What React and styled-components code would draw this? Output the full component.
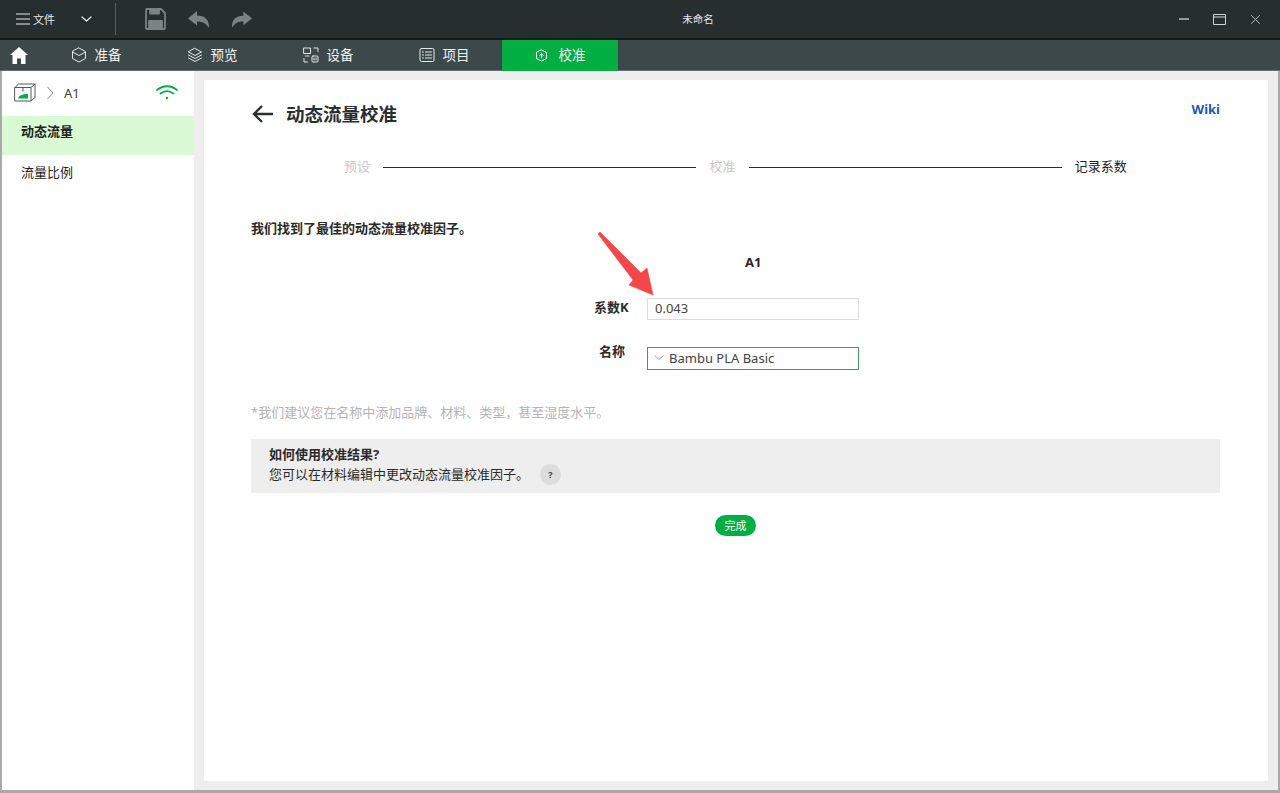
import styled, {createGlobalStyle} from 'styled-components'

const green = '#00ae42'
const toolGrey = '#7a8282'
const cjk = '"Noto Sans", "Noto Sans CJK SC", sans-serif'

const Global = createGlobalStyle`
    html, body {margin: 0; padding: 0; height: 100%; background: #fff;}
    body {font-family: ${cjk}; overflow: hidden;}
    * {box-sizing: border-box;}
`

const Page = styled.div`
    width: 1280px;
    height: 793px;
    display: flex;
    flex-direction: column;
    border-left: 2px solid #a9a9a9;
    border-right: 2px solid #a9a9a9;
    border-bottom: 3px solid #a9a9a9;
`
const TitleBar = styled.div`
    height: 40px;
    margin-left: -2px;
    margin-right: -2px;
    flex: none;
    display: flex;
    align-items: center;
    background: #262e30;
    border-bottom: 2px solid #15191a;
    color: #e6e8e8;
`
const TitleLeft = styled.div`
    width: 260px;
    display: flex;
    align-items: center;
    padding-left: 16px;
`
const FileLabel = styled.span`
    font-size: 11px;
    margin-left: 3px;
    width: 26px;
`
const Chevron = styled.svg`
    margin-left: 22px;
`
const Divider = styled.div`
    width: 1px;
    height: 32px;
    margin: 0 29px 0 23px;
    background: #59615f;
`
const ToolIcon = styled.svg`
    margin-right: ${props => props.$gap}px;
`
const WindowTitle = styled.div`
    flex: 1;
    text-align: center;
    font-size: 10.5px;
    padding-bottom: 1px;
`
const WindowButtons = styled.div`
    width: 144px;
    display: flex;
    align-items: center;
    padding-left: 43px;
    gap: 24px;
`
const TabBar = styled.div`
    height: 31px;
    margin-left: -2px;
    margin-right: -2px;
    flex: none;
    display: flex;
    background: #3d484b;
    border-bottom: 1px solid #667072;
`
const HomeTab = styled.div`
    width: 38px;
    display: flex;
    align-items: center;
    justify-content: center;
`
const Tab = styled.div`
    width: 116px;
    display: flex;
    align-items: center;
    justify-content: center;
    gap: 8px;
    font-size: 13.5px;
    line-height: 18px;
    padding-bottom: 1px;
    color: #f0f2f2;
    background: ${props => props.$active ? green : 'transparent'};
    margin-bottom: ${props => props.$active ? '-1px' : '0'};
`
const Body = styled.div`
    flex: 1;
    display: flex;
    min-height: 0;
`
const Sidebar = styled.div`
    width: 192px;
    flex: none;
    background: #fff;
`
const DeviceRow = styled.div`
    height: 45px;
    display: flex;
    align-items: center;
    padding: 0 16px 2px 12px;
    font-size: 13px;
    color: #3a3f40;
`
const DeviceName = styled.span`
    margin-left: 10px;
    flex: 1;
`
const SideItem = styled.div`
    height: 39px;
    margin-bottom: 2px;
    padding: 5px 0 0 19px;
    font-size: 13px;
    line-height: 20px;
    color: #232323;
    font-weight: ${props => props.$active ? 700 : 400};
    background: ${props => props.$active ? '#d9fbd3' : 'transparent'};
`
const Main = styled.div`
    flex: 1;
    background: #eeeeee;
    padding: 9px 10px;
    display: flex;
`
const Panel = styled.div`
    flex: 1;
    background: #fff;
    padding: 20px 48px 0 47px;
`
const Header = styled.div`
    height: 28px;
    display: flex;
    align-items: center;
`
const PageTitle = styled.h1`
    margin: 0 0 0 11px;
    flex: 1;
    font-size: 18.5px;
    line-height: 27px;
    height: 28px;
    font-weight: 700;
    color: #2a2f30;
`
const WikiLink = styled.a`
    align-self: flex-start;
    font-size: 13px;
    line-height: 18px;
    font-weight: 700;
    color: #1a56b8;
`
const Stepper = styled.div`
    height: 24px;
    margin: 27px 0 0 93px;
    display: flex;
    align-items: center;
    gap: 13.2px;
    font-size: 13px;
    line-height: 22px;
`
const Step = styled.span`
    flex: none;
    height: 24px;
    color: ${props => props.$done ? '#232323' : '#c9c9c9'};
`
const StepLine = styled.div`
    flex: none;
    width: 313px;
    height: 1px;
    background: #2b2b2b;
`
const Intro = styled.p`
    margin: 39px 0 0;
    height: 20px;
    font-size: 13px;
    line-height: 20px;
    font-weight: 700;
    color: #2a2a2a;
`
const Form = styled.div`
    position: relative;
    margin: 14px 0 0 343px;
    display: grid;
    grid-template-columns: 36px 212px;
    column-gap: 17px;
    width: 265px;
`
const DeviceTitle = styled.div`
    grid-column: 1 / -1;
    height: 20px;
    margin-bottom: 26px;
    padding-left: 151px;
    font-size: 13px;
    line-height: 20px;
    font-weight: 700;
    color: #2a2a2a;
`
const FieldLabel = styled.label`
    font-size: 13px;
    line-height: 18px;
    font-weight: 700;
    white-space: nowrap;
    color: #2a2a2a;
    text-align: ${props => props.$short ? 'right' : 'left'};
    padding-right: ${props => props.$short ? '5px' : '0'};
    margin-top: ${props => props.$short ? '-5px' : '0'};
`
const Field = styled.div`
    height: ${props => props.$select ? 23 : 22}px;
    display: flex;
    align-items: center;
    padding-left: ${props => props.$select ? 6 : 7}px;
    padding-bottom: 2px;
    gap: 5px;
    font-size: 13px;
    color: #444;
    background: #fff;
    border: 1px solid ${props => props.$select ? '#3a9a64' : '#dcdcdc'};
    margin-bottom: ${props => props.$select ? 0 : 27}px;
`
const Arrow = styled.svg`
    position: absolute;
    left: 0;
    top: -22px;
`
const Note = styled.p`
    margin: 32px 0 0;
    height: 20px;
    font-size: 13px;
    line-height: 20px;
    color: #b4b4b4;
`
const InfoBox = styled.div`
    height: 54px;
    margin-top: 17px;
    padding: 6px 18px 0;
    background: #eeeeee;
    font-size: 13px;
    line-height: 19px;
    color: #2a2a2a;
`
const InfoTitle = styled.div`
    font-weight: 700;
`
const InfoText = styled.div`
    display: flex;
    align-items: center;
    gap: 11px;
`
const HelpBadge = styled.span`
    width: 21px;
    height: 21px;
    border-radius: 50%;
    background: #dcdcdc;
    display: flex;
    align-items: center;
    justify-content: center;
    font-size: 9px;
    font-weight: 700;
    color: #444;
`
const Actions = styled.div`
    margin-top: 22px;
    display: flex;
    justify-content: center;
`
const DoneButton = styled.button`
    width: 41px;
    height: 21px;
    padding: 0 0 2px;
    border: none;
    border-radius: 11px;
    background: ${green};
    color: #fff;
    font-family: ${cjk};
    font-size: 11px;
`

const stroke = {fill: 'none', stroke: 'currentColor', strokeLinecap: 'round', strokeLinejoin: 'round'}

const tabs = [
    {label: '准备', icon: <path d="M8 1 14.500 4.500v7L8 15 1.500 11.500v-7zM1.500 5 8 8.500 14.500 5" {...stroke}/>},
    {label: '预览', icon: <><path d="M8 1.500 14.500 5 8 8.500 1.500 5z" {...stroke}/><path d="M1.500 8 8 11.500 14.500 8M1.500 11 8 14.500l6.500-3.500" {...stroke}/></>},
    {label: '设备', icon: <><path d="M1 1h6.500v5.500H1zM2.500 9h3.500M1 11.500V15h3.500M11 1h4v3.500" {...stroke}/><rect x="9" y="9" width="6" height="6" rx="1" {...stroke}/><path d="M11 11v2M13 11v2" {...stroke}/></>},
    {label: '项目', icon: <><rect x="1" y="1.500" width="14" height="13" rx="1.500" {...stroke}/><path d="M3.500 5h1M3.500 8h1M3.500 11h1M6.500 5h6M6.500 8h6M6.500 11h6" {...stroke}/></>}
]

export default function App() {
    return (
        <Page>
            <Global/>
            <TitleBar>
                <TitleLeft>
                    <svg width="14" height="12" viewBox="0 0 14 12" {...stroke} strokeLinecap="butt">
                        <path d="M0 1h14M0 6h14M0 11h14"/>
                    </svg>
                    <FileLabel>文件</FileLabel>
                    <Chevron width="11" height="6" viewBox="0 0 11 6" {...stroke} strokeWidth="1.300">
                        <path d="M1 1l4.500 4L10 1"/>
                    </Chevron>
                    <Divider/>
                    <ToolIcon $gap={22} width="21" height="22" viewBox="0 0 21 22" color={toolGrey} {...stroke} strokeWidth="1.800">
                        <path d="M2 1h14l4 4v15a1 1 0 0 1-1 1H2a1 1 0 0 1-1-1V2a1 1 0 0 1 1-1z"/>
                        <path d="M5 1.500h9v4H5z" fill={toolGrey}/>
                        <path d="M4 13h13v7.500H4z" fill={toolGrey}/>
                    </ToolIcon>
                    <ToolIcon $gap={21} width="22" height="17" viewBox="0 0 22 17">
                        <path d="M9 0 0 7.500 9 14.500V10.500c6 0 9 2 12 6.500 .5-8-4-12.500-12-12.500z" fill={toolGrey}/>
                    </ToolIcon>
                    <ToolIcon $gap={0} width="21" height="17" viewBox="0 0 22 17">
                        <path d="M13 0l9 7.500L13 14.500V10.500c-6 0-9 2-12 6.500 -.5-8 4-12.500 12-12.500z" fill={toolGrey}/>
                    </ToolIcon>
                </TitleLeft>
                <WindowTitle>未命名</WindowTitle>
                <WindowButtons>
                    <svg width="10" height="2" viewBox="0 0 10 2"><path d="M0 1h10" stroke="#b8bcbc" strokeWidth="1.500"/></svg>
                    <svg width="13" height="11" viewBox="0 0 13 11" color="#d0d3d3" {...stroke} strokeLinecap="butt">
                        <path d="M.5.500h12v10H.5zM.5 3h12"/>
                    </svg>
                    <svg width="9" height="9" viewBox="0 0 9 9" color="#b8bcbc" {...stroke} style={{marginLeft: 1}}>
                        <path d="M.5.500l8 8M8.500.500l-8 8"/>
                    </svg>
                </WindowButtons>
            </TitleBar>
            <TabBar>
                <HomeTab>
                    <svg width="18" height="17" viewBox="0 0 18 17">
                        <path d="M9 0 0 8h2.500v9h4.500v-5.500h4V17h4.500V8H18z" fill="#fff"/>
                    </svg>
                </HomeTab>
                {tabs.map(t => (
                    <Tab key={t.label}>
                        <svg width="16" height="16" viewBox="0 0 16 16" color="#e6e8e8">{t.icon}</svg>
                        <span>{t.label}</span>
                    </Tab>
                ))}
                <Tab $active>
                    <svg width="13" height="13" viewBox="0 0 13 13" color="#fff" {...stroke} style={{marginRight: 3}}>
                        <path d="M6.500 1 11.500 3.500v6L6.500 12l-5-2.500v-6z"/>
                        <path d="M6.500 9V5M4.800 6.500l1.700-1.700 1.700 1.700"/>
                    </svg>
                    <span>校准</span>
                </Tab>
            </TabBar>
            <Body>
                <Sidebar>
                    <DeviceRow>
                        <svg width="22" height="19" viewBox="0 0 22 19" color="#555b5c" {...stroke}>
                            <path d="M1 4.500h16v13.500H1zM1 4.500 4.500 1H21v13.500L17 18M17 4.500 21 1"/>
                            <path d="M9 5v3"/>
                            <path d="M4 15.500c1-3 4-4.500 10-4.500v4.500z" fill={green} stroke="none"/>
                        </svg>
                        <svg width="7" height="14" viewBox="0 0 7 14" color="#8a8f90" {...stroke} style={{marginLeft: 11}}>
                            <path d="M.500 1 6 7 .500 13"/>
                        </svg>
                        <DeviceName>A1</DeviceName>
                        <svg width="22" height="15" viewBox="0 0 22 15" fill="none" stroke={green} strokeWidth="1.800" strokeLinecap="round">
                            <path d="M1 5c6-5 14-5 20 0M4.500 8.500c4-3 9-3 13 0"/>
                            <circle cx="11" cy="13" r="1.200" fill={green} stroke="none"/>
                        </svg>
                    </DeviceRow>
                    <SideItem $active>动态流量</SideItem>
                    <SideItem>流量比例</SideItem>
                </Sidebar>
                <Main>
                    <Panel>
                        <Header>
                            <svg width="24" height="20" viewBox="0 0 24 20" fill="none" stroke="#2a2f30" strokeWidth="2.400">
                                <path d="M22 10H3M11 2l-8 8 8 8"/>
                            </svg>
                            <PageTitle>动态流量校准</PageTitle>
                            <WikiLink>Wiki</WikiLink>
                        </Header>
                        <Stepper>
                            <Step>预设</Step>
                            <StepLine/>
                            <Step>校准</Step>
                            <StepLine/>
                            <Step $done>记录系数</Step>
                        </Stepper>
                        <Intro>我们找到了最佳的动态流量校准因子。</Intro>
                        <Form>
                            <DeviceTitle>A1</DeviceTitle>
                            <FieldLabel>系数K</FieldLabel>
                            <Field>0.043</Field>
                            <FieldLabel $short>名称</FieldLabel>
                            <Field $select>
                                <svg width="10" height="5" viewBox="0 0 10 5" fill="none" stroke="#a5a5a5">
                                    <path d="M.500.500 5 4.500 9.500.500"/>
                                </svg>
                                Bambu PLA Basic
                            </Field>
                            <Arrow width="62" height="68" viewBox="0 0 62 68">
                                <polygon points="6,2 47,43 53,38 59,65 35,55 39,50 4,4" fill="#f4474a" stroke="#f4474a" strokeWidth="0.6" strokeLinejoin="round"/>
                            </Arrow>
                        </Form>
                        <Note>*我们建议您在名称中添加品牌、材料、类型，甚至湿度水平。</Note>
                        <InfoBox>
                            <InfoTitle>如何使用校准结果?</InfoTitle>
                            <InfoText>
                                您可以在材料编辑中更改动态流量校准因子。
                                <HelpBadge>?</HelpBadge>
                            </InfoText>
                        </InfoBox>
                        <Actions>
                            <DoneButton>完成</DoneButton>
                        </Actions>
                    </Panel>
                </Main>
            </Body>
        </Page>
    )
}
